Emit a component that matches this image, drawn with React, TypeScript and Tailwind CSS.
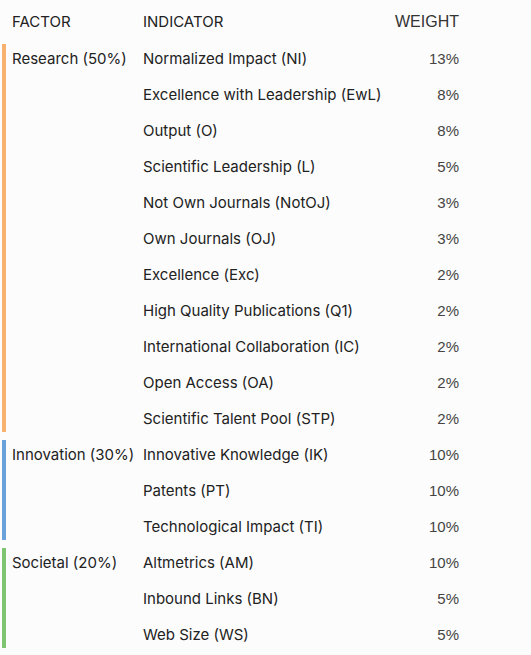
import React from "react";

type Group = { factor: string; color: string; rows: [string, string][] };

const groups: Group[] = [
  {
    factor: "Research (50%)",
    color: "bg-[#f8b26f]",
    rows: [
      ["Normalized Impact (NI)", "13%"],
      ["Excellence with Leadership (EwL)", "8%"],
      ["Output (O)", "8%"],
      ["Scientific Leadership (L)", "5%"],
      ["Not Own Journals (NotOJ)", "3%"],
      ["Own Journals (OJ)", "3%"],
      ["Excellence (Exc)", "2%"],
      ["High Quality Publications (Q1)", "2%"],
      ["International Collaboration (IC)", "2%"],
      ["Open Access (OA)", "2%"],
      ["Scientific Talent Pool (STP)", "2%"],
    ],
  },
  {
    factor: "Innovation (30%)",
    color: "bg-[#6ba1d9]",
    rows: [
      ["Innovative Knowledge (IK)", "10%"],
      ["Patents (PT)", "10%"],
      ["Technological Impact (TI)", "10%"],
    ],
  },
  {
    factor: "Societal (20%)",
    color: "bg-[#7fc471]",
    rows: [
      ["Altmetrics (AM)", "10%"],
      ["Inbound Links (BN)", "5%"],
      ["Web Size (WS)", "5%"],
    ],
  },
];

export default function App() {
  return (
    <div className="w-[531px] h-[655px] bg-[#fcfcfc] text-[#222] font-['Inter',sans-serif] text-[15px]">
      <div className="h-[41px] pt-[3px] flex items-center">
        <div className="w-[143px] pl-[12px]">FACTOR</div>
        <div className="w-[316px] flex justify-between items-center">
          <span>INDICATOR</span>
          <span className="font-['Liberation_Sans',sans-serif] text-[16px] text-[#333]">WEIGHT</span>
        </div>
      </div>
      {groups.map((g) => (
        <div key={g.factor} className="flex">
          <div className={`ml-[2px] w-[4px] mt-[3px] mb-[5px] ${g.color}`} />
          <div className="w-[137px] pl-[6px] h-[36px] flex items-center">{g.factor}</div>
          <div className="w-[316px] flex flex-col">
            {g.rows.map(([name, w]) => (
              <div key={name} className="h-[36px] flex items-center justify-between">
                <span>{name}</span>
                <span className="font-['Liberation_Sans',sans-serif] text-[#444]">{w}</span>
              </div>
            ))}
          </div>
        </div>
      ))}
    </div>
  );
}
